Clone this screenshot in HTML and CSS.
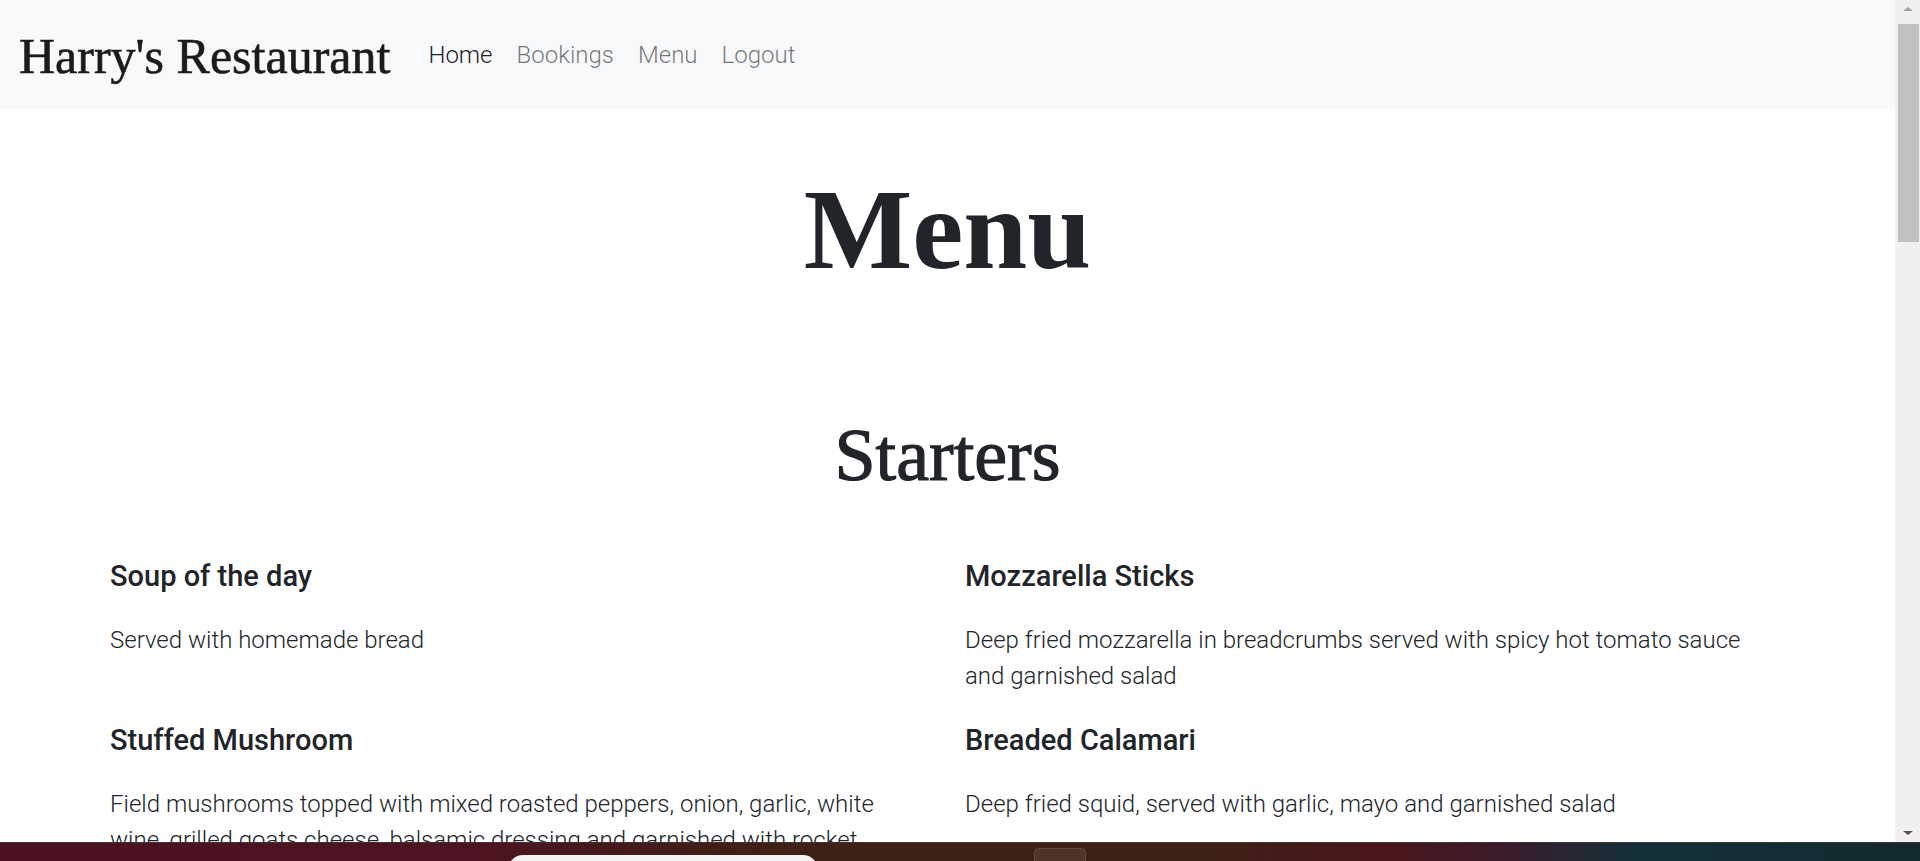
FILE: index.html
```html
<!DOCTYPE html>
<html lang="en">
<head>
<meta charset="utf-8">
<title>Harry's Restaurant - Menu</title>
<link rel="stylesheet" href="styles.css">
</head>
<body>
<div class="window">
  <div class="page">
    <nav class="navbar">
      <a class="brand" href="#">Harry's Restaurant</a>
      <ul class="nav">
        <li><a class="nav-link active" href="#">Home</a></li>
        <li><a class="nav-link" href="#">Bookings</a></li>
        <li><a class="nav-link" href="#">Menu</a></li>
        <li><a class="nav-link" href="#">Logout</a></li>
      </ul>
    </nav>
    <main class="content">
      <h1 class="title">Menu</h1>
      <h2 class="section-title">Starters</h2>
      <div class="menu-grid">
        <div class="item">
          <h3 class="item-name">Soup of the day</h3>
          <p class="item-desc">Served with homemade bread</p>
        </div>
        <div class="item">
          <h3 class="item-name">Mozzarella Sticks</h3>
          <p class="item-desc">Deep fried mozzarella in breadcrumbs served with spicy hot tomato sauce and garnished salad</p>
        </div>
        <div class="item">
          <h3 class="item-name">Stuffed Mushroom</h3>
          <p class="item-desc">Field mushrooms topped with mixed roasted peppers, onion, garlic, white wine, grilled goats cheese, balsamic dressing and garnished with rocket</p>
        </div>
        <div class="item">
          <h3 class="item-name">Breaded Calamari</h3>
          <p class="item-desc">Deep fried squid, served with garlic, mayo and garnished salad</p>
        </div>
      </div>
    </main>
  </div>
  <div class="scrollbar">
    <div class="arrow arrow-up"></div>
    <div class="thumb"></div>
    <div class="track"></div>
    <div class="arrow arrow-down"></div>
  </div>
</div>
<div class="taskbar">
  <div class="tb-search"></div>
  <div class="tb-app"></div>
</div>
</body>
</html>
```
FILE: styles.css
```css
html, body {
  margin: 0;
  padding: 0;
  height: 100%;
  overflow: hidden;
  background: #ffffff;
}

body {
  font-family: Roboto, "Liberation Sans", Arial, sans-serif;
  color: #212529;
}

.window {
  display: flex;
  height: 861px;
}

.page {
  flex: 1;
  min-width: 0;
  overflow: hidden;
}

/* Navbar */
.navbar {
  height: 109px;
  background: #f8f9fa;
  display: flex;
  align-items: center;
  padding-left: 19px;
}

.brand {
  font-family: "Liberation Serif", "Times New Roman", serif;
  font-size: 50px;
  line-height: 60px;
  color: #1b1b1b;
  text-decoration: none;
  -webkit-text-stroke: 0.6px #1b1b1b;
  margin-top: 2px;
}

.nav {
  list-style: none;
  display: flex;
  margin: 0 0 0 26px;
  padding: 0;
}

.nav-link {
  display: block;
  padding: 0 12px;
  font-family: Roboto, "Liberation Sans", sans-serif;
  font-weight: 300;
  font-size: 24px;
  line-height: 36px;
  color: rgba(0, 0, 0, 0.55);
  text-decoration: none;
  margin-top: 0;
}

.nav-link.active {
  color: rgba(0, 0, 0, 0.9);
}

/* Content */
.content {
  padding-top: 52px;
}

.title {
  margin: 0;
  text-align: center;
  font-family: "Liberation Serif", "Times New Roman", serif;
  font-weight: 700;
  font-size: 115px;
  line-height: 138px;
  color: #212529;
}

.section-title {
  margin: 113px 0 0;
  text-align: center;
  font-family: "Liberation Serif", "Times New Roman", serif;
  font-weight: 400;
  font-size: 74px;
  line-height: 86px;
  color: #212529;
  -webkit-text-stroke: 1.2px #212529;
}

.menu-grid {
  display: grid;
  grid-template-columns: 800px 800px;
  column-gap: 55px;
  padding-left: 110px;
  margin-top: 61px;
}

.item-name {
  margin: 0 0 29px;
  font-family: Roboto, "Liberation Sans", sans-serif;
  font-weight: 500;
  font-size: 29px;
  line-height: 34px;
  color: #212529;
}

.item-desc {
  margin: 0 0 29px;
  font-family: Roboto, "Liberation Sans", sans-serif;
  font-weight: 300;
  font-size: 24px;
  line-height: 36px;
  color: #212529;
}

/* Scrollbar */
.scrollbar {
  width: 25px;
  height: 843px;
  background: #f0f0f0;
  display: flex;
  flex-direction: column;
  align-items: center;
}

.arrow {
  width: 0;
  height: 0;
  border-left: 5px solid transparent;
  border-right: 5px solid transparent;
}

.arrow-up {
  border-bottom: 4px solid #a3a3a3;
  margin: 7px 0 13px;
}

.arrow-down {
  border-top: 4px solid #505050;
  margin: 0 0 8px;
}

.thumb {
  width: 21px;
  height: 218px;
  background: #c1c1c1;
  margin-left: 2px;
}

.track {
  flex: 1;
}

/* Taskbar overlay */
.taskbar {
  position: fixed;
  left: 0;
  right: 0;
  bottom: 0;
  height: 18px;
  border-top: 1px solid #3b3535;
  background: linear-gradient(90deg, #4a1221 0%, #4c1420 25%, #3e2015 40%, #3d2115 62%, #4a1519 72%, #3b1a2a 78%, #153039 85%, #12292e 100%);
  overflow: hidden;
}

.tb-search {
  position: absolute;
  left: 508px;
  top: 12px;
  width: 310px;
  height: 30px;
  background: #f3f3f3;
  border-radius: 15px;
}

.tb-app {
  position: absolute;
  left: 1034px;
  top: 5px;
  width: 50px;
  height: 30px;
  background: #4e3328;
  border: 1px solid #6a4a3e;
  border-radius: 5px;
}
```
